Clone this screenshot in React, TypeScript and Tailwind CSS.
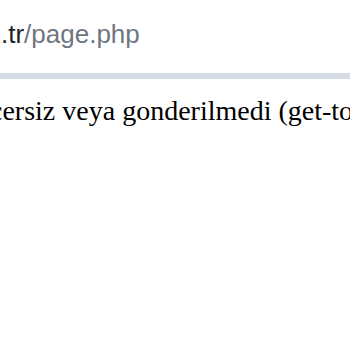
export default function App() {
  return (
    <div className="h-[350px] w-[350px] overflow-hidden bg-white">
      <div className="flex h-[73px] items-start bg-white pl-[1px] pt-[19px]">
        <span className="whitespace-nowrap text-[26px] leading-[30px]" style={{ fontFamily: '"Liberation Sans", Arial, sans-serif' }}>
          <span className="text-[#202124]">.tr</span>
          <span className="text-[#6e7681]">/page.php</span>
        </span>
      </div>
      <div className="h-[6px] bg-[#d5dce4]" />
      <div className="pt-[17px]">
        <p
          className="ml-[-113px] whitespace-nowrap text-[28px] leading-[30px] text-black"
          style={{ fontFamily: '"Liberation Serif", "Times New Roman", serif' }}
        >
          Token gecersiz veya gonderilmedi (get-token)
        </p>
      </div>
    </div>
  );
}
